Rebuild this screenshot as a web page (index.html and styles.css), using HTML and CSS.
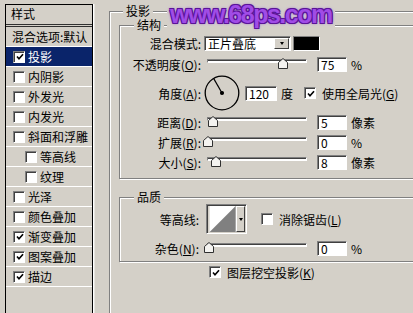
FILE: index.html
```html
<!DOCTYPE html>
<html lang="zh-CN">
<head>
    <meta charset="UTF-8">
    <title>图层样式</title>
    <link rel="stylesheet" href="styles.css">
</head>
<body>
<div class="dialog">

    <!-- Style list -->
    <div class="sidebar">
        <div class="side-head">样式</div>
        <div class="side-item">混合选项:默认</div>
        <div class="side-item selected"><span class="cb checked"><svg viewBox="0 0 8 8"><path d="M1 3.5 L3 5.8 L7 1.2"/></svg></span>投影</div>
        <div class="side-item"><span class="cb"></span>内阴影</div>
        <div class="side-item"><span class="cb"></span>外发光</div>
        <div class="side-item"><span class="cb"></span>内发光</div>
        <div class="side-item"><span class="cb"></span>斜面和浮雕</div>
        <div class="side-item sub"><span class="cb"></span>等高线</div>
        <div class="side-item sub"><span class="cb"></span>纹理</div>
        <div class="side-item"><span class="cb"></span>光泽</div>
        <div class="side-item"><span class="cb"></span>颜色叠加</div>
        <div class="side-item"><span class="cb checked"><svg viewBox="0 0 8 8"><path d="M1 3.5 L3 5.8 L7 1.2"/></svg></span>渐变叠加</div>
        <div class="side-item"><span class="cb checked"><svg viewBox="0 0 8 8"><path d="M1 3.5 L3 5.8 L7 1.2"/></svg></span>图案叠加</div>
        <div class="side-item"><span class="cb checked"><svg viewBox="0 0 8 8"><path d="M1 3.5 L3 5.8 L7 1.2"/></svg></span>描边</div>
    </div>

    <!-- Drop shadow settings -->
    <div class="main">
        <fieldset class="group outer">
            <legend>投影</legend>

            <fieldset class="group inner">
                <legend>结构</legend>

                <div class="row">
                    <span class="label">混合模式:</span>
                    <div class="select">
                        <span class="select-text">正片叠底</span>
                        <span class="drop-btn"><i class="arrow"></i></span>
                    </div>
                    <span class="swatch"></span>
                </div>

                <div class="row gap-opacity">
                    <span class="label">不透明度(<u>O</u>):</span>
                    <div class="slider">
                        <span class="track"></span>
                        <svg class="thumb" style="left:75px" viewBox="0 0 10 11"><path d="M0.5 10.5 V4.5 L5 0.5 L9.5 4.5 V10.5 Z"/></svg>
                    </div>
                    <span class="field">75</span>
                    <span class="unit">%</span>
                </div>

                <div class="row angle-row">
                    <span class="label">角度(<u>A</u>):</span>
                    <svg class="dial" viewBox="0 0 36 36">
                        <circle cx="18" cy="18" r="16.8"/>
                        <line x1="18" y1="18" x2="9.6" y2="3.4"/>
                        <circle class="dot" cx="18" cy="18" r="1.4"/>
                    </svg>
                    <span class="field angle-field">120</span>
                    <span class="unit">度</span>
                    <span class="cb checked global-cb"><svg viewBox="0 0 8 8"><path d="M1 3.5 L3 5.8 L7 1.2"/></svg></span>
                    <span class="cb-text">使用全局光(<u>G</u>)</span>
                </div>

                <div class="row">
                    <span class="label">距离(<u>D</u>):</span>
                    <div class="slider">
                        <span class="track"></span>
                        <svg class="thumb" style="left:5px" viewBox="0 0 10 11"><path d="M0.5 10.5 V4.5 L5 0.5 L9.5 4.5 V10.5 Z"/></svg>
                    </div>
                    <span class="field">5</span>
                    <span class="unit">像素</span>
                </div>

                <div class="row">
                    <span class="label">扩展(<u>R</u>):</span>
                    <div class="slider">
                        <span class="track"></span>
                        <svg class="thumb" style="left:0px" viewBox="0 0 10 11"><path d="M0.5 10.5 V4.5 L5 0.5 L9.5 4.5 V10.5 Z"/></svg>
                    </div>
                    <span class="field">0</span>
                    <span class="unit">%</span>
                </div>

                <div class="row">
                    <span class="label">大小(<u>S</u>):</span>
                    <div class="slider">
                        <span class="track"></span>
                        <svg class="thumb" style="left:8px" viewBox="0 0 10 11"><path d="M0.5 10.5 V4.5 L5 0.5 L9.5 4.5 V10.5 Z"/></svg>
                    </div>
                    <span class="field">8</span>
                    <span class="unit">像素</span>
                </div>
            </fieldset>

            <fieldset class="group inner quality">
                <legend>品质</legend>

                <div class="row contour-row">
                    <span class="label">等高线:</span>
                    <div class="contour">
                        <svg class="curve" viewBox="0 0 28 28"><rect width="28" height="28" fill="#fff"/><polygon points="0,28 28,0 28,28" fill="#808080"/></svg>
                        <span class="drop-btn"><i class="arrow"></i></span>
                    </div>
                    <span class="cb aa-cb"></span>
                    <span class="cb-text">消除锯齿(<u>L</u>)</span>
                </div>

                <div class="row noise-row">
                    <span class="label">杂色(<u>N</u>):</span>
                    <div class="slider">
                        <span class="track"></span>
                        <svg class="thumb" style="left:1px" viewBox="0 0 10 11"><path d="M0.5 10.5 V4.5 L5 0.5 L9.5 4.5 V10.5 Z"/></svg>
                    </div>
                    <span class="field">0</span>
                    <span class="unit">%</span>
                </div>
            </fieldset>

            <div class="row knockout">
                <span class="cb checked"><svg viewBox="0 0 8 8"><path d="M1 3.5 L3 5.8 L7 1.2"/></svg></span>
                <span class="cb-text">图层挖空投影(<u>K</u>)</span>
            </div>
        </fieldset>
    </div>

    <div class="watermark">www.68ps.com</div>
</div>
</body>
</html>
```

FILE: styles.css
```css
* {
    box-sizing: border-box;
}

body {
    margin: 0;
    background: #d4d0c8;
    font-family: "Noto Sans CJK SC", sans-serif;
    font-size: 12px;
    color: #000;
    overflow: hidden;
}

u {
    text-decoration: underline;
}

.dialog {
    position: relative;
    display: flex;
    width: 413px;
    height: 313px;
    padding-top: 4px;
    overflow: hidden;
}

/* ---------- left list ---------- */

.sidebar {
    flex-shrink: 0;
    width: 88px;
    height: 330px;
    margin-left: 5px;
    border: 1px solid #000;
    box-shadow: 1px 0 0 #fff, 2px 0 0 #e8e6e0;
}

.side-head {
    height: 22px;
    padding-left: 5px;
    line-height: 18px;
    border-bottom: 3px double #303030;
}

.side-item {
    display: flex;
    align-items: center;
    height: 20px;
    padding-left: 6px;
    border-bottom: 1px solid #fff;
    white-space: nowrap;
}

.side-item .cb {
    margin: 0 3px 0 1px;
}

.side-item.sub {
    padding-left: 18px;
}

.side-item.selected {
    background: #0a246a;
    color: #fff;
}

/* ---------- checkbox ---------- */

.cb {
    display: inline-flex;
    align-items: center;
    justify-content: center;
    flex-shrink: 0;
    width: 12px;
    height: 12px;
    background: #fff;
    border: 1px solid;
    border-color: #808080 #fff #fff #808080;
    box-shadow: inset 1px 1px 0 #404040;
}

.cb svg {
    width: 8px;
    height: 8px;
    margin: 1px 0 0 1px;
}

.cb svg path {
    fill: none;
    stroke: #000;
    stroke-width: 1.6;
}

.cb-text {
    margin-left: 6px;
    white-space: nowrap;
}

/* ---------- group boxes ---------- */

.main {
    flex-shrink: 0;
    width: 420px;
    margin-left: 16px;
}

.group {
    margin: 0;
    padding: 0;
    min-width: 0;
    border: 1px solid #808080;
    box-shadow: inset 1px 1px 0 #fff, 1px 1px 0 #fff;
}

.group legend {
    padding: 0 3px;
    line-height: 14px;
    background: #d4d0c8;
}

.outer {
    height: 330px;
    padding-left: 9px;
}

.outer > legend {
    margin-left: 4px;
}

.inner {
    padding-bottom: 8px;
}

.inner > legend {
    margin-left: 14px;
}

.quality {
    margin-top: 11px;
    padding-bottom: 5px;
}

/* ---------- rows ---------- */

.row {
    display: flex;
    align-items: center;
    height: 16px;
    margin-top: 4px;
    white-space: nowrap;
}

.row:first-of-type {
    margin-top: 3px;
}

.gap-opacity {
    margin-top: 5px;
}

.label {
    flex-shrink: 0;
    width: 81px;
    text-align: right;
}

.quality .label {
    width: 79px;
}

.select {
    display: flex;
    align-items: center;
    justify-content: space-between;
    width: 87px;
    height: 15px;
    margin-left: 3px;
    background: #fff;
    border: 1px solid;
    border-color: #808080 #fff #fff #808080;
    box-shadow: inset 1px 1px 0 #404040;
}

.select-text {
    padding-left: 3px;
    line-height: 13px;
}

.drop-btn {
    display: flex;
    align-items: center;
    justify-content: center;
    width: 15px;
    height: 11px;
    margin-right: 1px;
    background: #d4d0c8;
    border: 1px solid;
    border-color: #fff #404040 #404040 #fff;
}

.arrow {
    width: 0;
    height: 0;
    border-left: 2.5px solid transparent;
    border-right: 2.5px solid transparent;
    border-top: 3px solid #000;
}

.swatch {
    width: 27px;
    height: 15px;
    margin-left: 2px;
    background: #000;
    border: 1px solid;
    border-color: #808080 #fff #fff #808080;
}

.slider {
    position: relative;
    flex-shrink: 0;
    width: 106px;
    height: 12px;
    margin-left: 2px;
}

.quality .slider {
    margin-left: 4px;
}

.track {
    position: absolute;
    top: 1px;
    left: 4px;
    right: 2px;
    height: 4px;
    background: #fff;
    border: 1px solid;
    border-color: #808080 #fff #fff #808080;
    box-shadow: inset 0 1px 0 #404040;
}

.thumb {
    position: absolute;
    top: 0;
    width: 10px;
    height: 11px;
}

.thumb path {
    fill: #f4f3f0;
    stroke: #303030;
    stroke-width: 1;
}

.field {
    flex-shrink: 0;
    width: 30px;
    height: 15px;
    margin-left: 8px;
    padding-left: 3px;
    line-height: 13px;
    background: #fff;
    border: 1px solid;
    border-color: #808080 #fff #fff #808080;
    box-shadow: inset 1px 1px 0 #404040;
}

.unit {
    margin-left: 4px;
}

.angle-row {
    height: 34px;
}

.dial {
    width: 36px;
    height: 36px;
    margin-left: 3px;
}

.dial circle {
    fill: none;
    stroke: #000;
    stroke-width: 1.3;
}

.dial line {
    stroke: #000;
    stroke-width: 1.2;
}

.dial .dot {
    fill: #000;
}

.angle-field {
    width: 32px;
    margin-left: 5px;
}

.global-cb {
    margin-left: 11px;
}

.contour-row {
    height: 30px;
    margin-top: 0;
}

.row.contour-row:first-of-type {
    margin-top: 0;
}

.contour {
    display: flex;
    align-items: center;
    width: 41px;
    height: 30px;
    margin-left: 7px;
    padding: 1px;
    background: #d4d0c8;
    border: 1px solid;
    border-color: #808080 #fff #fff #808080;
    box-shadow: inset 1px 1px 0 #404040;
}

.curve {
    width: 28px;
    height: 26px;
    margin-left: 1px;
}

.contour .drop-btn {
    width: 9px;
    height: 26px;
    margin: 0;
}

.aa-cb {
    margin-left: 14px;
}

.noise-row {
    margin-top: 6px;
}

.knockout {
    height: 14px;
    margin-top: 7px;
    margin-left: 90px;
}

/* ---------- watermark ---------- */

.watermark {
    position: absolute;
    left: 167px;
    top: 1px;
    padding: 0 3px;
    background: #d4d0c8;
    font-family: "Liberation Sans", Arial, sans-serif;
    font-weight: bold;
    font-size: 25px;
    line-height: 27px;
    letter-spacing: -1.5px;
    color: #a04ce6;
    text-shadow: -1px -1px 0 #5a1498, 1px -1px 0 #5a1498, -1px 1px 0 #5a1498, 1px 1px 0 #5a1498, 0 0 3px #5a1498, 0 0 5px #d2b8f0;
}
```
